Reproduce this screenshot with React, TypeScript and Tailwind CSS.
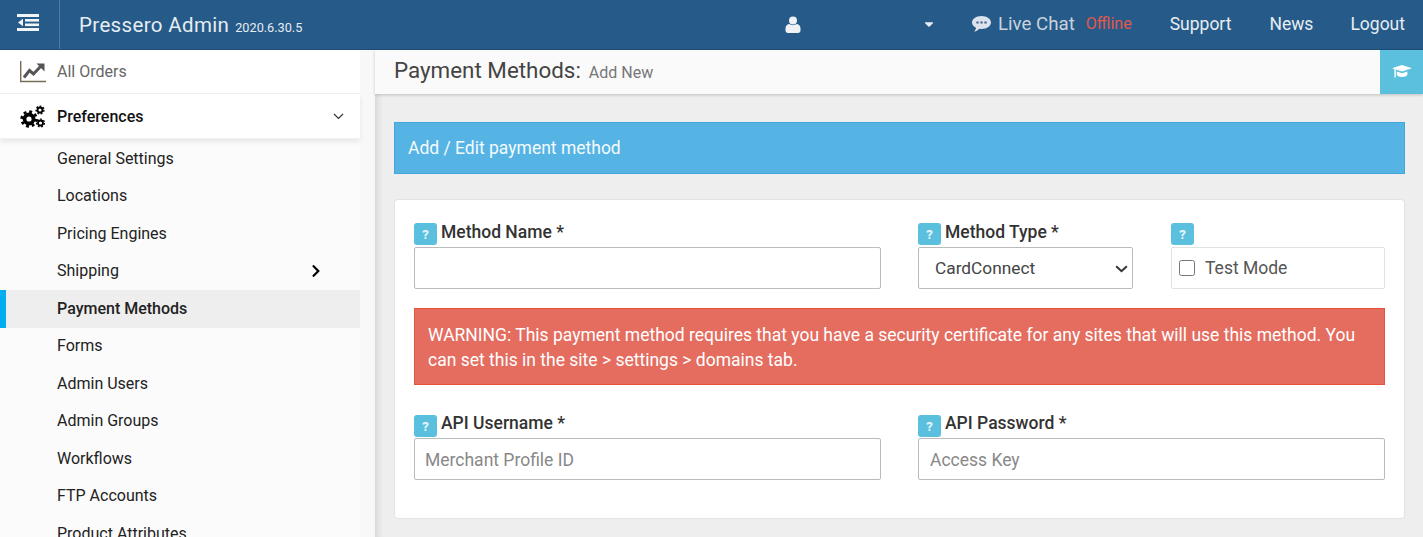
import { FaChevronRight, FaCaretDown } from "react-icons/fa";

function Help() {
  return (
    <span className="inline-flex h-[22px] w-[23px] items-center justify-center rounded-[3px] bg-[#5bc0de] text-[13px] font-bold leading-none text-[#eef8fb]">?</span>
  );
}

function FieldLabel({ text, tight }: { text: string; tight?: boolean }) {
  return (
    <div className="flex h-[26px] items-start gap-[4px] text-[17.5px] font-[480] leading-[22px] text-[#333]">
      <div className="mt-[3px] flex"><Help /></div>
      <span className={tight ? "" : "mt-[1px]"}>{text}</span>
    </div>
  );
}

function Gear({ cx, cy, r, w, teeth }: { cx: number; cy: number; r: number; w: number; teeth: number }) {
  const outer = r + w * 0.75;
  const circ = 2 * Math.PI * outer;
  const seg = circ / (teeth * 2);
  return (
    <g fill="none" stroke="#000">
      <circle cx={cx} cy={cy} r={r} strokeWidth={w} />
      <circle cx={cx} cy={cy} r={outer} strokeWidth={w * 0.7} strokeDasharray={`${seg} ${seg}`} />
    </g>
  );
}

function CogsIcon() {
  return (
    <svg width="25" height="23" viewBox="0 0 25 23" className="shrink-0">
      <Gear cx={9} cy={14} r={4.5} w={3.8} teeth={8} />
      <Gear cx={20} cy={5} r={2.5} w={1.9} teeth={7} />
      <Gear cx={20.5} cy={18} r={2.5} w={1.9} teeth={7} />
    </svg>
  );
}

function ChartIcon() {
  return (
    <svg width="26" height="22" viewBox="0 0 26 22" className="shrink-0">
      <path d="M0.7 0V20.5H26" fill="none" stroke="#7a6a58" strokeWidth="1.4" />
      <path d="M4 16.5L9.5 9.5L13.5 13L21 5" fill="none" stroke="#555" strokeWidth="3" />
      <path d="M16.5 2.5H24.5V10.5Z" fill="#555" />
    </svg>
  );
}

function UserIcon() {
  return (
    <svg width="16" height="17" viewBox="0 0 16 17" className="shrink-0">
      <circle cx="8" cy="4.4" r="4" fill="#eef2f6" />
      <path d="M0.5 12.5C0.5 9.5 2.5 8 4.5 8C6 9.5 10 9.5 11.5 8C13.5 8 15.5 9.5 15.5 12.5V14.5C15.5 16 14.5 17 13 17H3C1.5 17 0.5 16 0.5 14.5Z" fill="#eef2f6" />
    </svg>
  );
}

function ChatIcon() {
  return (
    <svg width="19" height="16" viewBox="0 0 19 16" className="shrink-0">
      <path d="M9.5 0C14.7 0 19 2.9 19 6.5S14.7 13 9.5 13C8.7 13 8 12.9 7.3 12.8C6 14.2 4.2 15.4 2 15.8C3.2 14.6 3.9 13.2 4 11.8C1.6 10.6 0 8.7 0 6.5C0 2.9 4.3 0 9.5 0Z" fill="#dbe4ec" />
      <circle cx="5.5" cy="6.5" r="1.3" fill="#5a6f9a" />
      <circle cx="9.5" cy="6.5" r="1.3" fill="#5a6f9a" />
      <circle cx="13.5" cy="6.5" r="1.3" fill="#5a6f9a" />
    </svg>
  );
}

function CapIcon() {
  return (
    <svg width="20" height="14" viewBox="0 0 20 14" fill="#fff">
      <path d="M10 0L20 3.2L10 6.6L3.8 4.5V12.5H2.4V4L0 3.2Z" />
      <path d="M4.8 6.6L10 8.3L15.4 6.6V9.6C15.4 11 13 12 10 12S4.8 11 4.8 9.6Z" />
    </svg>
  );
}

const items = ["General Settings", "Locations", "Pricing Engines", "Shipping", "Payment Methods", "Forms", "Admin Users", "Admin Groups", "Workflows", "FTP Accounts", "Product Attributes"];

export default function App() {
  return (
    <div className="flex h-[537px] flex-col overflow-hidden bg-[#eeeeee] font-['Roboto',sans-serif]">
      <header className="flex h-[50px] shrink-0 items-center border-b border-[#1f4d78] bg-[#265a88] text-white">
        <div className="flex h-full w-[60px] items-center justify-center border-r border-[#4f7ca3] pr-[2px]">
          <svg width="23" height="17" viewBox="0 0 23 17" className="-mt-[5px] -ml-[1px]" fill="#f2f5f8">
            <rect x="0" y="0" width="22" height="3" />
            <rect x="8" y="5" width="14" height="2.6" />
            <rect x="8" y="9.5" width="14" height="2.6" />
            <rect x="0" y="14" width="22" height="3" />
            <path d="M6 4.8 L1 8.5 L6 12.2 Z" />
          </svg>
        </div>
        <div className="ml-[19px] flex items-baseline text-[#e6ecf2]">
          <span className="text-[20.5px] leading-[28px] tracking-[0.35px]">Pressero Admin</span>
          <span className="ml-[6px] text-[12.7px]">2020.6.30.5</span>
        </div>
        <div className="ml-auto flex items-center">
          <UserIcon />
          <FaCaretDown className="ml-[121px] mr-[36px] text-[14px] text-[#e9eef3]" />
          <ChatIcon />
          <span className="ml-[7px] text-[18.7px] text-[#c6d3df]">Live Chat</span>
          <span className="ml-[11px] text-[16px] text-[#e2584d]">Offline</span>
          <span className="ml-[38px] text-[17.5px] text-[#e8edf2]">Support</span>
          <span className="ml-[38px] text-[17.5px] text-[#e8edf2]">News</span>
          <span className="mx-[18px] ml-[37px] text-[17.5px] text-[#e8edf2]">Logout</span>
        </div>
      </header>
      <div className="flex min-h-0 flex-1">
        <aside className="flex w-[375px] shrink-0 flex-col overflow-hidden bg-[#f8f8f8]">
          <div className="w-[360px] flex-1 bg-[#fbfbfb]">
            <div className="flex h-[44px] items-center border-b border-[#f0f0f0] bg-white pl-[20px] text-[16px] text-[#666]">
              <ChartIcon />
              <span className="ml-[11px]">All Orders</span>
            </div>
            <div className="relative flex h-[45px] items-center border-b border-[#f0f0f0] bg-white pl-[20px] text-[16px] font-medium text-[#111] shadow-[0_3px_5px_rgba(0,0,0,0.08)]">
              <CogsIcon />
              <span className="ml-[12px] mt-[1px]">Preferences</span>
              <svg width="11" height="7" viewBox="0 0 11 7" className="ml-auto mr-[16px]">
                <path d="M1 1L5.5 5.5L10 1" fill="none" stroke="#333" strokeWidth="1.2" />
              </svg>
            </div>
            <ul className="pt-[1px]">
              {items.map((t) => {
                const active = t === "Payment Methods";
                return (
                  <li
                    key={t}
                    className={
                      active
                        ? "flex h-[37.5px] items-center border-l-[6px] border-[#00aeef] bg-[#eeeeee] pl-[51px] text-[16px] font-medium text-[#222]"
                        : "flex h-[37.5px] items-center pl-[57px] text-[16px] text-[#222]"
                    }
                  >
                    <span>{t}</span>
                    {t === "Shipping" && <FaChevronRight className="ml-[190px] text-[14px] text-black" />}
                  </li>
                );
              })}
            </ul>
          </div>
        </aside>
        <main className="min-w-0 flex-1 shadow-[inset_8px_0_7px_-6px_rgba(0,0,0,0.12)]">
          <div className="flex h-[44px] items-stretch justify-between bg-[#fafafa] shadow-[0_1px_3px_rgba(0,0,0,0.2)]">
            <div className="flex items-baseline pl-[19px] pt-[4px]">
              <span className="text-[22.4px] text-[#444]">Payment Methods:</span>
              <span className="ml-[8px] text-[16px] text-[#777]">Add New</span>
            </div>
            <div className="flex w-[43px] items-center justify-center bg-[#5bc0de] text-white">
              <CapIcon />
            </div>
          </div>
          <div className="pl-[19px] pr-[18px] pt-[28px]">
            <div className="flex h-[52px] items-center border border-[#43a6da] bg-[#56b4e4] pl-[13px] text-[17.5px] font-[450] text-[#f4fafd]">
              Add / Edit payment method
            </div>
            <div className="mt-[25px] h-[320px] rounded-[4px] border border-[#e3e3e3] bg-white px-[19px] pt-[20px] text-[#444]">
              <div className="flex">
                <div className="w-[467px]">
                  <FieldLabel text="Method Name *" />
                  <input className="mt-[1px] block h-[42px] w-full rounded-[2px] border border-[#bbb] bg-white" />
                </div>
                <div className="ml-[37px] w-[215px]">
                  <FieldLabel text="Method Type *" />
                  <div className="relative mt-[1px]">
                    <select defaultValue="CardConnect" className="block h-[42px] w-full appearance-none rounded-[2px] border border-[#bbb] bg-white pl-[16px] pt-[1px] text-[17.3px] text-[#444]">
                      <option>CardConnect</option>
                    </select>
                    <svg width="13" height="8" viewBox="0 0 13 8" className="pointer-events-none absolute right-[5px] top-[18px]">
                      <path d="M1.2 1.2L6.5 6.2L11.8 1.2" fill="none" stroke="#333" strokeWidth="2" />
                    </svg>
                  </div>
                </div>
                <div className="ml-[38px] w-[214px]">
                  <div className="flex h-[26px] items-start pt-[3px]"><Help /></div>
                  <label className="mt-[1px] flex h-[42px] items-center rounded-[2px] border border-[#e2e2e2] pl-[7px] text-[17.5px] text-[#555]">
                    <input type="checkbox" className="h-[16px] w-[16px]" />
                    <span className="ml-[10px]">Test Mode</span>
                  </label>
                </div>
              </div>
              <div className="mt-[19px] h-[77px] w-[971px] border border-[#e5533d] bg-[#e46d5f] px-[13px] pt-[14px] text-[17.5px] leading-[25px] text-white">
                WARNING: This payment method requires that you have a security certificate for any sites that will use this method. You can set this in the site &gt; settings &gt; domains tab.
              </div>
              <div className="mt-[27px] flex">
                <div className="w-[467px]">
                  <FieldLabel tight text="API Username *" />
                  <input placeholder="Merchant Profile ID" className="block h-[42px] w-full rounded-[2px] border border-[#bbb] bg-white pl-[10px] pt-[2px] text-[17.5px] placeholder:text-[#888]" />
                </div>
                <div className="ml-[37px] w-[467px]">
                  <FieldLabel tight text="API Password *" />
                  <input placeholder="Access Key" className="block h-[42px] w-full rounded-[2px] border border-[#bbb] bg-white pl-[11px] pt-[2px] text-[17.5px] placeholder:text-[#888]" />
                </div>
              </div>
            </div>
          </div>
        </main>
      </div>
    </div>
  );
}
